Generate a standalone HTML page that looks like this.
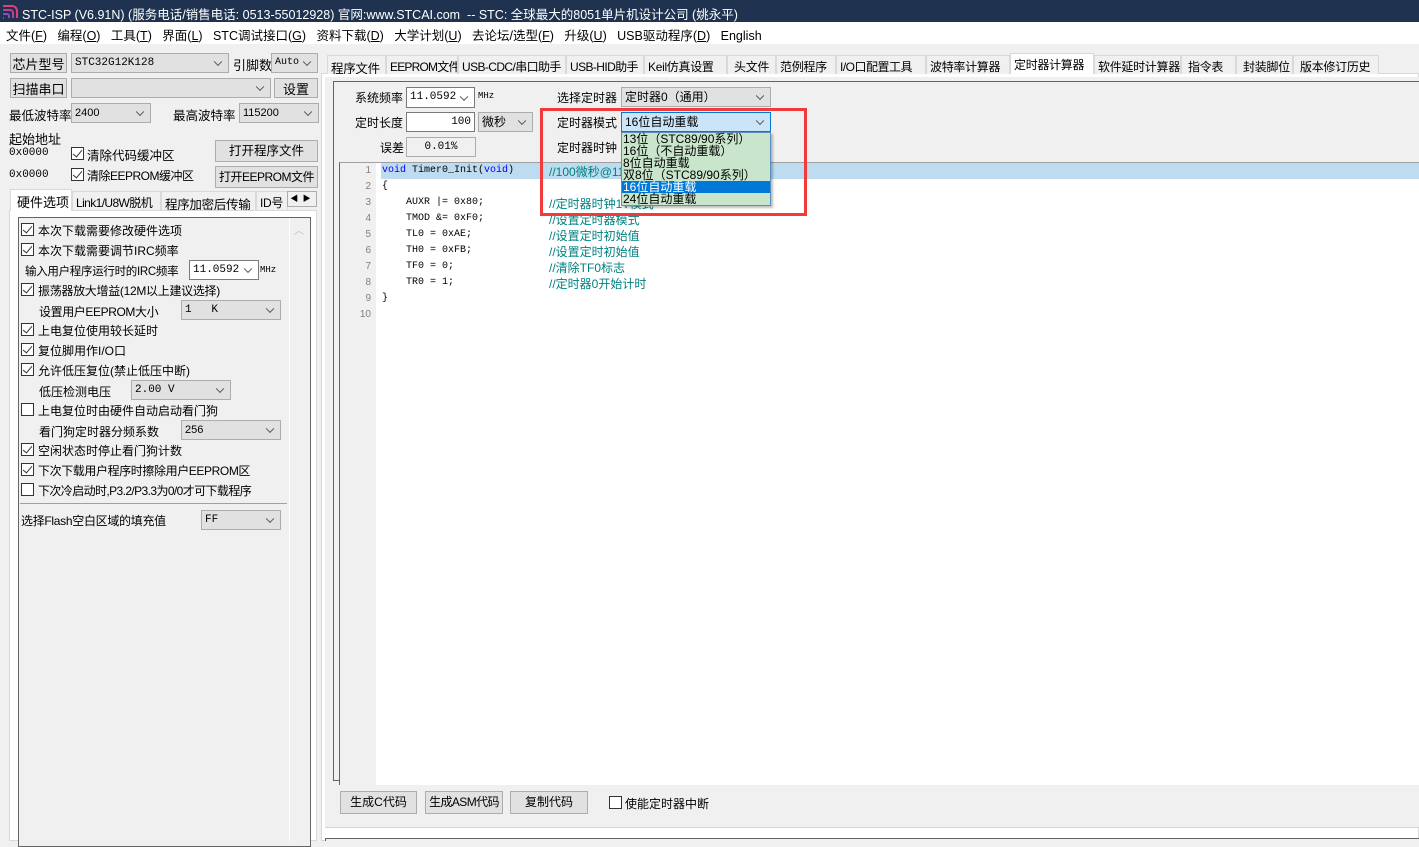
<!DOCTYPE html>
<html><head><meta charset="utf-8">
<style>
*{box-sizing:border-box;margin:0;padding:0;white-space:nowrap}
body{width:1419px;height:841px;overflow:hidden;background:#f0f0f0;font-family:"Liberation Sans","Noto Sans CJK SC",sans-serif;font-size:12px;color:#000;position:relative}
.a{position:absolute}
.m{font-family:"Liberation Mono","Noto Sans CJK SC",monospace}
.btn{position:absolute;background:#e1e1e1;border:1px solid #adadad;text-align:center;font-size:12px;overflow:hidden}
.cb{position:absolute;background:#e1e1e1;border:1px solid #adadad;font-size:11px;padding-left:3px;overflow:hidden}
.cb.w{background:#fff;border-color:#7a7a7a}
.cb:after{content:"";position:absolute;right:7px;top:50%;width:5px;height:5px;border-right:1px solid #555;border-bottom:1px solid #555;transform:translateY(-70%) rotate(45deg)}
.chk{position:absolute;width:13px;height:13px;border:1px solid #333;background:#fff}
.chk.on:after{content:"";position:absolute;left:3px;top:0px;width:4px;height:8px;border-right:1.5px solid #333;border-bottom:1.5px solid #333;transform:rotate(40deg)}
.tx{position:absolute;background:#fff;border:1px solid #7a7a7a}
.tab{position:absolute;top:55px;height:19px;border:1px solid #d9d9d9;border-bottom:none;background:#f0f0f0;font-size:12px;padding:2px 3px 0;overflow:hidden;letter-spacing:-0.3px}
.ln{position:absolute;left:339px;width:32px;text-align:right;color:#808080;font-size:10px}
.cd{position:absolute;font-size:10px;color:#000}
.cm{position:absolute;left:549px;font-size:12px;color:#008080}
.dd{position:absolute;left:622px;width:148px;height:12px;font-size:12px;line-height:12px;padding-left:1px}
.l{position:absolute;font-size:12px}
</style></head><body>
<div class="a" style="left:0;top:0;width:1419px;height:22px;background:#1f3350"></div>
<svg class="a" style="left:2px;top:3px" width="18" height="16"><g fill="none" stroke-width="2"><path d="M1 3h9a5 5 0 0 1 5 5v7" stroke="#e0407a"/><path d="M1 7h7a3 3 0 0 1 3 3v5" stroke="#c04090"/><path d="M1 11h4a2 2 0 0 1 2 2v2" stroke="#8050c0"/><path d="M1 15h1" stroke="#5060d0"/></g></svg>
<div class="a" style="left:22px;top:4px;color:#fff;font-size:12.5px">STC-ISP (V6.91N) (服务电话/销售电话: 0513-55012928) 官网:www.STCAI.com&nbsp; -- STC: 全球最大的8051单片机设计公司 (姚永平)</div>
<div class="a" style="left:0;top:22px;width:1419px;height:22px;background:#fff"></div>
<div class="a" style="left:6px;top:25px;font-size:12.5px">文件(<u>F</u>)&nbsp;&nbsp; 编程(<u>O</u>)&nbsp;&nbsp; 工具(<u>T</u>)&nbsp;&nbsp; 界面(<u>L</u>)&nbsp;&nbsp; STC调试接口(<u>G</u>)&nbsp;&nbsp; 资料下载(<u>D</u>)&nbsp;&nbsp; 大学计划(<u>U</u>)&nbsp;&nbsp; 去论坛/选型(<u>F</u>)&nbsp;&nbsp; 升级(<u>U</u>)&nbsp;&nbsp; USB驱动程序(<u>D</u>)&nbsp;&nbsp; English</div>

<div class="btn" style="left:10px;top:53px;width:57px;height:20px;font-size:13px">芯片型号</div>
<div class="cb m" style="left:71px;top:53px;width:158px;height:20px;line-height:18px">STC32G12K128</div>
<div class="l" style="left:233px;top:55px;font-size:13px">引脚数</div>
<div class="cb m" style="left:271px;top:53px;width:47px;height:20px;line-height:18px;font-size:10px">Auto</div>
<div class="btn" style="left:10px;top:78px;width:57px;height:20px;font-size:13px">扫描串口</div>
<div class="cb" style="left:71px;top:78px;width:200px;height:20px"></div>
<div class="btn" style="left:274px;top:78px;width:44px;height:20px;font-size:13px">设置</div>
<div class="l" style="left:9px;top:105px;font-size:12.5px">最低波特率</div>
<div class="cb" style="left:71px;top:103px;width:80px;height:20px;line-height:18px">2400</div>
<div class="l" style="left:173px;top:105px;font-size:12.5px">最高波特率</div>
<div class="cb" style="left:239px;top:103px;width:80px;height:20px;line-height:18px">115200</div>
<div class="l" style="left:9px;top:129px;font-size:13px">起始地址</div>
<div class="a m" style="left:9px;top:147px;font-size:11px">0x0000</div>
<div class="chk on" style="left:71px;top:147px"></div><div class="l" style="left:87px;top:145px;font-size:12.5px">清除代码缓冲区</div>
<div class="btn" style="left:215px;top:140px;width:103px;height:22px;line-height:20px;font-size:12.5px">打开程序文件</div>
<div class="a m" style="left:9px;top:169px;font-size:11px">0x0000</div>
<div class="chk on" style="left:71px;top:168px"></div><div class="l" style="left:87px;top:167px;font-size:12px;letter-spacing:-0.5px">清除EEPROM缓冲区</div>
<div class="btn" style="left:215px;top:166px;width:103px;height:22px;line-height:20px;letter-spacing:-0.5px">打开EEPROM文件</div>

<div class="a" style="left:9px;top:210px;width:308px;height:631px;background:#fff;border:1px solid #d9d9d9"></div>
<div class="a" style="left:10px;top:189px;width:62px;height:22px;background:#fff;border:1px solid #d9d9d9;border-bottom:none;font-size:13px;padding:2px 0 0 6px">硬件选项</div>
<div class="tab" style="left:72px;top:191px;width:89px;letter-spacing:-0.6px">Link1/U8W脱机</div>
<div class="tab" style="left:161px;top:191px;width:95px;font-size:12.5px">程序加密后传输</div>
<div class="tab" style="left:256px;top:191px;width:32px">ID号</div>
<div class="a" style="left:287px;top:191px;width:30px;height:16px;border:1px solid #adadad;background:#f0f0f0;font-size:8px;line-height:14px">&nbsp;◀&nbsp;&nbsp;▶</div>
<div class="a" style="left:18px;top:217px;width:293px;height:630px;background:#f0f0f0;border:1px solid #646464"></div>
<div class="a" style="left:289px;top:218px;width:1px;height:623px;background:#fff"></div>
<div class="a" style="left:294px;top:222px;color:#bbb;font-size:10px">︿</div>
<div class="a" style="left:20px;top:503px;width:267px;height:1px;background:#a0a0a0"></div>

<div class="a" style="left:321px;top:73px;width:1098px;height:768px;background:#fff;border:1px solid #d9d9d9"></div>
<div class="a" style="left:325px;top:77px;width:1094px;height:750px;background:#f0f0f0"></div>
<div class="tab" style="left:327px;width:59px;font-size:12.5px">程序文件</div>
<div class="tab" style="left:386px;width:72px;letter-spacing:-0.8px">EEPROM文件</div>
<div class="tab" style="left:458px;width:108px;letter-spacing:-0.6px">USB-CDC/串口助手</div>
<div class="tab" style="left:566px;width:78px;letter-spacing:-0.6px">USB-HID助手</div>
<div class="tab" style="left:644px;width:83px">Keil仿真设置</div>
<div class="tab" style="left:727px;width:49px">&nbsp;头文件</div>
<div class="tab" style="left:776px;width:60px">范例程序</div>
<div class="tab" style="left:836px;width:90px;letter-spacing:-0.5px">I/O口配置工具</div>
<div class="tab" style="left:926px;width:84px">波特率计算器</div>
<div class="tab" style="left:1010px;top:53px;height:21px;width:84px;background:#fff">定时器计算器</div>
<div class="tab" style="left:1094px;width:87px">软件延时计算器</div>
<div class="tab" style="left:1181px;width:55px">&nbsp;指令表</div>
<div class="tab" style="left:1236px;width:57px">&nbsp;封装脚位</div>
<div class="tab" style="left:1293px;width:86px">&nbsp;版本修订历史</div>

<div class="a" style="left:333px;top:81px;width:1090px;height:700px;border:1px solid #646464;border-right:none"></div>
<div class="l" style="left:355px;top:89px">系统频率</div>
<div class="cb w m" style="left:406px;top:87px;width:69px;height:21px;line-height:19px">11.0592</div>
<div class="a m" style="left:478px;top:91px;font-size:9px">MHz</div>
<div class="l" style="left:355px;top:114px">定时长度</div>
<div class="tx m" style="left:406px;top:112px;width:69px;height:20px;text-align:right;padding-right:3px;line-height:18px;font-size:11px">100</div>
<div class="cb" style="left:478px;top:112px;width:55px;height:20px;line-height:18px;font-size:12px">微秒</div>
<div class="l" style="left:380px;top:139px">误差</div>
<div class="a m" style="left:406px;top:137px;width:70px;height:20px;background:#f0f0f0;border:1px solid #adadad;text-align:center;line-height:18px;font-size:11px">0.01%</div>
<div class="l" style="left:557px;top:89px">选择定时器</div>
<div class="cb" style="left:621px;top:87px;width:150px;height:20px;line-height:18px;font-size:12px">定时器0（通用）</div>
<div class="l" style="left:557px;top:114px">定时器模式</div>
<div class="l" style="left:557px;top:139px">定时器时钟</div>

<div class="a" style="left:339px;top:162px;width:1080px;height:623px;background:#fff;border-left:1px solid #646464;border-top:1px solid #a0a0a0"></div>
<div class="a" style="left:340px;top:163px;width:36px;height:622px;background:#f0f0f0"></div>
<div class="a" style="left:381px;top:163px;width:1038px;height:16px;background:#bddcef"></div>
<div class="ln" style="top:165px">1</div><div class="ln" style="top:181px">2</div><div class="ln" style="top:197px">3</div><div class="ln" style="top:213px">4</div><div class="ln" style="top:229px">5</div><div class="ln" style="top:245px">6</div><div class="ln" style="top:261px">7</div><div class="ln" style="top:277px">8</div><div class="ln" style="top:293px">9</div><div class="ln" style="top:309px">10</div>
<div class="cd m" style="left:382px;top:165px"><span style="color:#0000ff">void</span> Timer0_Init(<span style="color:#0000ff">void</span>)</div>
<div class="cd m" style="left:382px;top:181px">{</div>
<div class="cd m" style="left:406px;top:197px">AUXR |= 0x80;</div>
<div class="cd m" style="left:406px;top:213px">TMOD &amp;= 0xF0;</div>
<div class="cd m" style="left:406px;top:229px">TL0 = 0xAE;</div>
<div class="cd m" style="left:406px;top:245px">TH0 = 0xFB;</div>
<div class="cd m" style="left:406px;top:261px">TF0 = 0;</div>
<div class="cd m" style="left:406px;top:277px">TR0 = 1;</div>
<div class="cd m" style="left:382px;top:293px">}</div>
<div class="cm" style="top:163px">//100微秒@11</div>
<div class="cm" style="top:195px">//定时器时钟1T模式</div>
<div class="cm" style="top:211px">//设置定时器模式</div>
<div class="cm" style="top:227px">//设置定时初始值</div>
<div class="cm" style="top:243px">//设置定时初始值</div>
<div class="cm" style="top:259px">//清除TF0标志</div>
<div class="cm" style="top:275px">//定时器0开始计时</div>

<div class="btn" style="left:340px;top:791px;width:77px;height:23px;line-height:21px">生成C代码</div>
<div class="btn" style="left:425px;top:791px;width:78px;height:23px;line-height:21px;letter-spacing:-0.6px">生成ASM代码</div>
<div class="btn" style="left:510px;top:791px;width:78px;height:23px;line-height:21px">复制代码</div>
<div class="chk" style="left:609px;top:796px"></div>
<div class="l" style="left:625px;top:795px">使能定时器中断</div>
<div class="a" style="left:325px;top:827px;width:1094px;height:1px;background:#bddcef"></div>
<div class="a" style="left:325px;top:838px;width:1094px;height:3px;border-top:1px solid #646464;border-left:1px solid #646464;background:#f0f0f0"></div>

<div class="cb" style="left:621px;top:112px;width:150px;height:20px;line-height:18px;font-size:12px;background:#cce4f7;border-color:#0078d7">16位自动重载</div>
<div class="a" style="left:621px;top:132px;width:150px;height:74px;background:#c9e5cc;border:1px solid #5a8fbf;box-shadow:2px 2px 2px rgba(0,0,0,.25)"></div>
<div class="dd" style="top:133px">13位（STC89/90系列）</div>
<div class="dd" style="top:145px">16位（不自动重载）</div>
<div class="dd" style="top:157px">8位自动重载</div>
<div class="dd" style="top:169px">双8位（STC89/90系列）</div>
<div class="dd" style="top:181px;background:#0078d7;color:#fff">16位自动重载</div>
<div class="dd" style="top:193px">24位自动重载</div>
<div class="a" style="left:540px;top:108px;width:267px;height:108px;border:3px solid #f23a3a"></div>

<div class="chk on" style="left:21px;top:223px"></div><div class="l" style="left:38px;top:222px">本次下载需要修改硬件选项</div>
<div class="chk on" style="left:21px;top:243px"></div><div class="l" style="left:38px;top:242px">本次下载需要调节IRC频率</div>
<div class="l" style="left:25px;top:263px;font-size:11.5px;letter-spacing:-0.3px">输入用户程序运行时的IRC频率</div>
<div class="cb w m" style="left:189px;top:260px;width:70px;height:20px;line-height:18px">11.0592</div>
<div class="a m" style="left:260px;top:265px;font-size:9px">MHz</div>
<div class="chk on" style="left:21px;top:283px"></div><div class="l" style="left:38px;top:282px;letter-spacing:-0.3px">振荡器放大增益(12M以上建议选择)</div>
<div class="l" style="left:39px;top:303px;letter-spacing:-0.4px">设置用户EEPROM大小</div>
<div class="cb m" style="left:181px;top:300px;width:100px;height:20px;line-height:18px">1&nbsp;&nbsp;&nbsp;K</div>
<div class="chk on" style="left:21px;top:323px"></div><div class="l" style="left:38px;top:322px">上电复位使用较长延时</div>
<div class="chk on" style="left:21px;top:343px"></div><div class="l" style="left:38px;top:342px">复位脚用作I/O口</div>
<div class="chk on" style="left:21px;top:363px"></div><div class="l" style="left:38px;top:362px">允许低压复位(禁止低压中断)</div>
<div class="l" style="left:39px;top:383px">低压检测电压</div>
<div class="cb m" style="left:131px;top:380px;width:100px;height:20px;line-height:18px">2.00 V</div>
<div class="chk" style="left:21px;top:403px"></div><div class="l" style="left:38px;top:402px">上电复位时由硬件自动启动看门狗</div>
<div class="l" style="left:39px;top:423px">看门狗定时器分频系数</div>
<div class="cb" style="left:181px;top:420px;width:100px;height:20px;line-height:18px">256</div>
<div class="chk on" style="left:21px;top:443px"></div><div class="l" style="left:38px;top:442px">空闲状态时停止看门狗计数</div>
<div class="chk on" style="left:21px;top:463px"></div><div class="l" style="left:38px;top:462px;letter-spacing:-0.4px">下次下载用户程序时擦除用户EEPROM区</div>
<div class="chk" style="left:21px;top:483px"></div><div class="l" style="left:38px;top:482px;letter-spacing:-0.6px">下次冷启动时,P3.2/P3.3为0/0才可下载程序</div>
<div class="l" style="left:21px;top:512px;letter-spacing:-0.3px">选择Flash空白区域的填充值</div>
<div class="cb m" style="left:201px;top:510px;width:80px;height:20px;line-height:18px">FF</div>
</body></html>
